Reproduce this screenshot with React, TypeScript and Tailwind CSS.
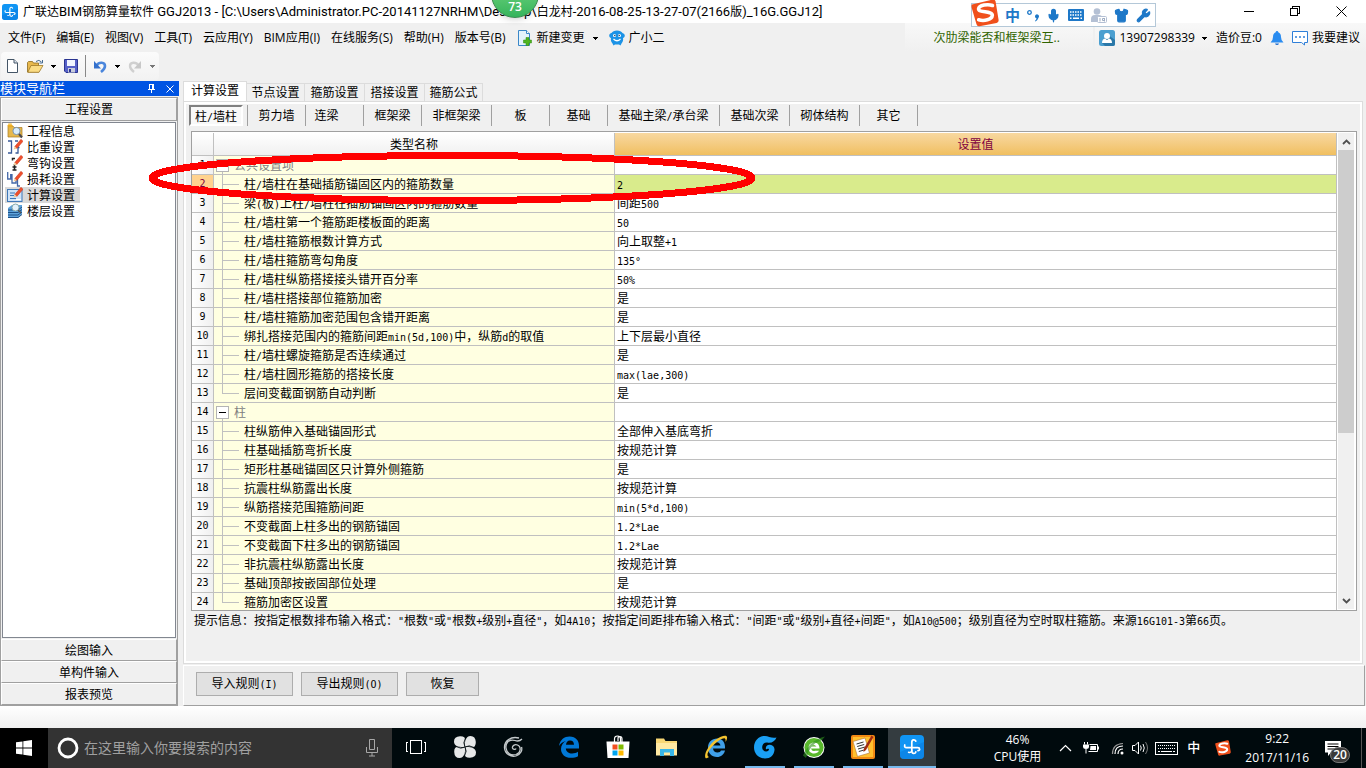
import React from "react";
import { Wrench, Shirt, Mic } from "lucide-react";

const UI = "font-['Open_Sans','Noto_Sans_CJK_SC',sans-serif]";
const SONG = "font-['Noto_Sans_CJK_SC',sans-serif]";

/* Chinese text with half-width Latin runs */
function T({ children }: { children: string }) {
  const parts = children.split(/([\x21-\x7e°]+)/);
  return (
    <>
      {parts.map((p, i) =>
        i % 2 === 1 ? (
          <span key={i} className="font-['DejaVu_Sans_Mono',monospace] text-[10px] leading-none">
            {p}
          </span>
        ) : (
          p
        )
      )}
    </>
  );
}

function Caret({ gray = false }: { gray?: boolean }) {
  return (
    <svg width="5" height="3" viewBox="0 0 5 3" shapeRendering="crispEdges">
      <path d="M0 0h5v1h-1v1h-1v1h-1v-1h-1v-1h-1z" fill={gray ? "#777" : "#000"} />
    </svg>
  );
}

function AppMark() {
  return (
    <>
      <rect width="24" height="24" rx="4" fill="#1095f4" />
      <path d="M0 17 24 7v13a4 4 0 0 1-4 4H4a4 4 0 0 1-4-4z" fill="#0878dc" opacity=".5" />
      <path
        d="M15.800 6.200C15 4.300 11.800 4.200 11.800 7.200V16c0 3 3.700 3.300 4 .8M4.800 10c-.6 1.600.2 2.700 1.800 2.700h11.200c2.400 0 2.400 3 .2 2.900"
        fill="none"
        stroke="#fff"
        strokeWidth="1.700"
        strokeLinecap="round"
      />
      <path d="M8.500 17.200c1.800.6 3.300-.3 3.300-2" fill="none" stroke="#fff" strokeWidth="1.500" strokeLinecap="round" />
    </>
  );
}

function SogouLogo({ size }: { size: number }) {
  return (
    <svg width={size} height={size} viewBox="0 0 28 28">
      <path d="M1 5.500 21.500.6q2.600-.4 3.100 2L27.600 21q.3 2.300-2 2.900L8.500 27.300q-2.400.4-3-2L.6 8.500Q.2 6 1 5.500z" fill="#f0501c" />
      <path
        d="M21.500 6.500C17 4.800 8 6 7.600 9.800c-.3 4 14 2 13.700 6.600-.3 4.300-8.300 6-13.600 4.400"
        fill="none"
        stroke="#fff"
        strokeWidth="3.600"
        strokeLinecap="round"
      />
    </svg>
  );
}

const menus = ["文件(F)", "编辑(E)", "视图(V)", "工具(T)", "云应用(Y)", "BIM应用(I)", "在线服务(S)", "帮助(H)", "版本号(B)"];

const titleParts = ["广联达", "BIM", "钢筋算量软件", " GGJ2013 - [C:\\Users\\Administrator.PC-20141127NRHM\\Desktop\\", "白龙村", "-2016-08-25-13-27-07(2166", "版", ")_16G.GGJ12]"];

function TitleBar() {
  return (
    <header className={`flex h-[23px] shrink-0 items-center bg-white pl-0.5 ${UI}`}>
      <svg width="16" height="16" viewBox="0 0 24 24"><AppMark /></svg>
      <h1 className="ml-[5px] flex-1 text-[12px] leading-4 whitespace-pre">
        {titleParts.map((p, i) =>
          i % 2 === 1 ? (
            <span key={i} className="font-['Roboto',sans-serif] text-[13px] leading-none">{p}</span>
          ) : (
            p
          )
        )}
      </h1>
      <div className="flex pr-0.5">
        <button aria-label="最小化" className="grid h-[22px] w-[46px] place-items-center">
          <svg width="11" height="11" shapeRendering="crispEdges"><path d="M0 5.500h10" stroke="#000" /></svg>
        </button>
        <button aria-label="还原" className="grid h-[22px] w-[46px] place-items-center">
          <svg width="11" height="11" shapeRendering="crispEdges"><path d="M.5 2.500h7v7h-7zM2.500 2.500v-2h7v7h-2" fill="none" stroke="#000" /></svg>
        </button>
        <button aria-label="关闭" className="grid h-[22px] w-[46px] place-items-center">
          <svg width="11" height="11"><path d="M.5.500l10 10M10.500.500l-10 10" stroke="#000" /></svg>
        </button>
      </div>
    </header>
  );
}

function MenuBar() {
  return (
    <div className={`flex h-7 shrink-0 items-center justify-between text-[12px] leading-4 whitespace-nowrap ${UI}`}>
      <nav className="flex items-center gap-[11px] pt-0.5 pl-2">
        {menus.map((m) => (
          <button key={m}>{m}</button>
        ))}
        <button className="flex items-center">
          <svg width="16" height="16" viewBox="0 0 16 16">
            <path d="M1.500.500h8l3 3v12h-11z" fill="#e4f3fc" stroke="#3a87c8" />
            <path d="M9.500.500v3h3" fill="#fff" stroke="#3a87c8" />
            <path d="M9 7.500h3v2.500h2.500v3H12v2.500H9V13H6.500v-3H9z" fill="#4fb520" stroke="#2f8a10" strokeWidth=".5" />
          </svg>
          <span className="mr-2 ml-1">新建变更</span>
          <Caret />
        </button>
        <button className="flex items-center gap-1">
          <svg width="16" height="16" viewBox="0 0 16 16">
            <path d="M2.500 3Q4 .5 8 .5T13.500 3q2.300.5 2.300 2.500c0 1.500-1 2.200-1.800 2.500.5 2-.2 4-1.500 5.500l-1 2-1.500-1H6l-1.500 1-1-2C2.200 12 1.500 10 2 8 1.200 7.700.2 7 .2 5.500.2 3.500 2.500 3 2.500 3z" fill="#1c93e6" />
            <circle cx="5.500" cy="5.500" r="1.500" fill="#fff" />
            <circle cx="10.500" cy="5.500" r="1.500" fill="#fff" />
            <circle cx="5.800" cy="5.500" r=".7" fill="#135" />
            <circle cx="10.200" cy="5.500" r=".7" fill="#135" />
            <path d="M4.500 9q3.500 3.500 7 0" fill="none" stroke="#fff" strokeWidth="1.200" />
          </svg>
          广小二
        </button>
      </nav>
      <div className="flex h-full items-center">
        <a href="#tip" className="h-full w-[188px] bg-gradient-to-b from-[#f8f8f8] to-[#f0f0f0] pl-7 leading-[30px] text-[#2f6400]">
          次肋梁能否和框架梁互..
        </a>
        <div className="ml-0.5 flex h-full items-center bg-gradient-to-b from-[#f8f8f8] to-[#f0f0f0] pt-0.5 pr-1.5 pl-1">
          <button className="flex items-center">
            <svg width="16" height="16" viewBox="0 0 16 16">
              <rect width="16" height="16" rx="2.500" fill="#4b9fd0" />
              <path d="M8 4l8 6v4q0 2-2 2H6l-3-3z" fill="#2b78a8" />
              <circle cx="8" cy="6" r="3" fill="#fff" />
              <path d="M3 13q0-4 3-4.500L8 10l2-1.500q3 .5 3 4.500z" fill="#fff" />
            </svg>
            <span className="mr-[7px] ml-1">13907298339</span>
            <Caret />
          </button>
          <span className="ml-[9px]">造价豆:0</span>
          <button aria-label="通知" className="ml-2">
            <svg width="14" height="16" viewBox="0 0 14 16">
              <path d="M7 1q1.300 0 1.300 1.300Q11 3.300 11 7q0 3.500 2.500 5.500H.5Q3 10.500 3 7q0-3.700 2.700-4.700Q5.700 1 7 1z" fill="#2a8cf0" />
              <path d="M5 13.500h4q-.5 1.500-2 1.500t-2-1.500z" fill="#1a6cd0" />
            </svg>
          </button>
          <button className="ml-2 flex items-center gap-1">
            <svg width="16" height="16" viewBox="0 0 16 16">
              <path d="M.5 1.500h15v11h-3v2.500L9.500 12.500h-9z" fill="#fff" stroke="#2f7fd8" />
              <path d="M3 7h2M7 7h2M11 7h2" stroke="#2f7fd8" strokeWidth="1.300" />
            </svg>
            我要建议
          </button>
        </div>
      </div>
    </div>
  );
}

function Toolbar() {
  return (
    <div className="flex h-[30px] shrink-0 items-center pl-px">
      <div className="flex h-7 items-center rounded bg-gradient-to-b from-[#fbfbfb] to-[#f2f2f2] pr-1 pl-1.5">
        <button aria-label="新建">
          <svg width="11" height="14" viewBox="0 0 11 14">
            <path d="M.5.500h6.500l3.500 3.500v9.500H.5z" fill="#fff" stroke="#456" />
            <path d="M7 .5V4h3.500" fill="#dde6f0" stroke="#456" />
          </svg>
        </button>
        <button aria-label="打开" className="ml-[9px] flex items-center gap-[7px]">
          <svg width="17" height="14" viewBox="0 0 17 14">
            <path d="M.5 13V3.500l1-1h4l1 1.500h5V13z" fill="#e8b84c" stroke="#8a6a20" strokeWidth=".8" />
            <path d="M.8 13.300 4 6.500h12L12 13.300z" fill="#fbdc84" stroke="#a07a28" strokeWidth=".8" />
            <path d="M9 2.500Q12 0 14.500 3M15.500 1v3h-3" fill="none" stroke="#456a90" />
          </svg>
          <Caret />
        </button>
        <button aria-label="保存" className="ml-2">
          <svg width="14" height="14" viewBox="0 0 14 14">
            <path d="M.5.500h13v13H2l-1.500-1.500z" fill="#5560c8" stroke="#2a3490" />
            <path d="M3 1h8v6H3z" fill="#f0f4ff" />
            <path d="M4 9h7v4.500H4z" fill="#c8ccdc" />
            <path d="M5 10h2v3H5z" fill="#2a3490" />
          </svg>
        </button>
        <span className="mr-2 ml-[7px] h-[22px] w-px bg-[#888]" />
        <button aria-label="撤销" className="flex items-center gap-2">
          <svg width="13" height="13" viewBox="0 0 13 13">
            <path d="M2.500 5.500C5 1.500 11 2 11 6q0 3-4 6" fill="none" stroke="#4a86dc" strokeWidth="2.600" />
            <path d="M0 1v7.500h7z" fill="#3470cc" />
          </svg>
          <Caret />
        </button>
        <button aria-label="重做" className="ml-2 flex items-center gap-[9px]">
          <svg width="13" height="13" viewBox="0 0 13 13">
            <path d="M10.500 5.500C8 1.500 2 2 2 6q0 3 4 6" fill="none" stroke="#d0d0d0" strokeWidth="2.400" />
            <path d="M13 1v7.500H6z" fill="#c8c8c8" />
          </svg>
          <Caret gray />
        </button>
      </div>
    </div>
  );
}

const Pencil = () => (
  <>
    <path d="M14 .3 16 2.300 9.800 9.500 7.800 7.500z" fill="#f0502c" stroke="#c02a14" strokeWidth=".5" />
    <path d="M7.800 7.500 9.800 9.500 6.500 10.500z" fill="#f0c890" />
  </>
);

const navItems: { label: string; icon: React.ReactNode }[] = [
  {
    label: "工程信息",
    icon: (
      <>
        <path d="M1 3h5l1 1.500h8V14H1z" fill="#e6b84c" stroke="#a87820" strokeWidth=".7" />
        <path d="M3 0v5M.5 2.500h5M1 .7l4 3.600M5 .7 1 4.300" stroke="#f0b020" strokeWidth="1" />
        <circle cx="9.500" cy="8" r="3.600" fill="#d8ecfa" stroke="#7a93ab" />
        <path d="M12 11l3 3.500" stroke="#4a4a52" strokeWidth="2" />
      </>
    ),
  },
  {
    label: "比重设置",
    icon: (
      <>
        <path d="M1 2h3.500v12H1M8 2h3M11 7.500v6.500H8.500M11 8.500h1.500" fill="none" stroke="#3a5a98" strokeWidth="1.300" />
        <Pencil />
      </>
    ),
  },
  {
    label: "弯钩设置",
    icon: (
      <>
        <path d="M8 3.500H5.500v2M7.500 9v6M5.500 15h4M5.500 12h4" fill="none" stroke="#222" strokeWidth="1.500" />
        <Pencil />
      </>
    ),
  },
  {
    label: "损耗设置",
    icon: (
      <>
        <path d="M.7 1v7h3V3M5 3v9h4V9M10.500 8v7h2.500" fill="none" stroke="#4468a8" strokeWidth="1.300" />
        <Pencil />
      </>
    ),
  },
  {
    label: "计算设置",
    icon: (
      <>
        <rect x=".5" y="2.500" width="14.500" height="12" fill="#cfe3f8" stroke="#3f78b8" />
        <path d="M3 6h5M3 8.500h4M3 11.500h6" stroke="#3f78b8" />
        <path d="M9 12.500h5" stroke="#fff" />
        <Pencil />
      </>
    ),
  },
  {
    label: "楼层设置",
    icon: (
      <>
        <path d="M1 5l4-3h10v9l-4 4H1z" fill="#5fa4dc" />
        <path d="M1 7h10l4-3M1 9.500h10l4-3M1 12h10l4-3M1 14.500h10l4-3" fill="none" stroke="#1d4f86" strokeWidth="1" />
        <circle cx="8.500" cy="4.500" r="3.500" fill="#e4f2fc" stroke="#8aa" />
        <path d="M11 7l3 3" stroke="#555" strokeWidth="1.600" />
      </>
    ),
  },
];

function Sidebar() {
  const bar = "h-[22px] w-full border border-t-white border-r-[#a0a0a0] border-b-[#a0a0a0] border-l-white bg-[#f0f0f0] text-center leading-5";
  return (
    <aside className={`flex w-[179px] shrink-0 flex-col text-[12px] ${SONG}`}>
      <div className="flex h-[15px] shrink-0 items-center bg-[#0054e3] text-white">
        <span className="flex-1 pb-0.5 text-[13px] leading-[13px]">模块导航栏</span>
        <button aria-label="固定" className="mr-[11px]">
          <svg width="7" height="9" shapeRendering="crispEdges"><path d="M1.500 0v5M4.500 0v5M1 .5h5M5.500 0v5M0 5.500h7M3.500 5v4" stroke="#fff" fill="none" /></svg>
        </button>
        <button aria-label="关闭导航栏" className="mr-[5px]">
          <svg width="8" height="8"><path d="M.5.500l7 7M7.500.500l-7 7" stroke="#fff" /></svg>
        </button>
      </div>
      <div className="mt-px mr-px flex min-h-0 flex-1 flex-col border border-[#a0a0a0]">
        <button className="h-[23px] shrink-0 border border-t-white border-r-[#a0a0a0] border-b-[#a0a0a0] border-l-white pb-0.5 leading-[19px]">工程设置</button>
        <ul className="m-px min-h-0 flex-1 border border-[#828790] bg-white pl-0.5">
          {navItems.map((n) => (
            <li key={n.label} className="h-4">
              <button className={`flex h-4 items-center gap-1 pr-[5px] pl-0.5 leading-4 ${n.label === "计算设置" ? "bg-[#d9d9d9]" : ""}`}>
                <svg width="16" height="16" viewBox="0 0 16 16">{n.icon}</svg>
                {n.label}
              </button>
            </li>
          ))}
        </ul>
        <button className={bar}>绘图输入</button>
        <button className={bar}>单构件输入</button>
        <button className={bar}>报表预览</button>
      </div>
    </aside>
  );
}

type Row = [string, string];
const rows: Row[] = [
  ["公共设置项", ""],
  ["柱/墙柱在基础插筋锚固区内的箍筋数量", "2"],
  ["梁(板)上柱/墙柱在插筋锚固区内的箍筋数量", "间距500"],
  ["柱/墙柱第一个箍筋距楼板面的距离", "50"],
  ["柱/墙柱箍筋根数计算方式", "向上取整+1"],
  ["柱/墙柱箍筋弯勾角度", "135°"],
  ["柱/墙柱纵筋搭接接头错开百分率", "50%"],
  ["柱/墙柱搭接部位箍筋加密", "是"],
  ["柱/墙柱箍筋加密范围包含错开距离", "是"],
  ["绑扎搭接范围内的箍筋间距min(5d,100)中，纵筋d的取值", "上下层最小直径"],
  ["柱/墙柱螺旋箍筋是否连续通过", "是"],
  ["柱/墙柱圆形箍筋的搭接长度", "max(lae,300)"],
  ["层间变截面钢筋自动判断", "是"],
  ["柱", ""],
  ["柱纵筋伸入基础锚固形式", "全部伸入基底弯折"],
  ["柱基础插筋弯折长度", "按规范计算"],
  ["矩形柱基础锚固区只计算外侧箍筋", "是"],
  ["抗震柱纵筋露出长度", "按规范计算"],
  ["纵筋搭接范围箍筋间距", "min(5*d,100)"],
  ["不变截面上柱多出的钢筋锚固", "1.2*Lae"],
  ["不变截面下柱多出的钢筋锚固", "1.2*Lae"],
  ["非抗震柱纵筋露出长度", "按规范计算"],
  ["基础顶部按嵌固部位处理", "是"],
  ["箍筋加密区设置", "按规范计算"],
];
const isGroup = (i: number) => i === 0 || i === 13;
const isLast = (i: number) => i === 12 || i === 23;

function Branch({ i }: { i: number }) {
  return isGroup(i) ? (
    <svg width="20" height="18" shapeRendering="crispEdges" className="shrink-0">
      <rect x="2.500" y="3.500" width="12" height="12" fill="#fff" stroke="#b4b4b4" />
      <path d="M5 9.500h7" stroke="#000" />
      <path d="M8.500 16v2" stroke="#c0c0c0" />
    </svg>
  ) : (
    <svg width="30" height="18" shapeRendering="crispEdges" className="shrink-0">
      <path d={isLast(i) ? "M8.500 0V9.500H25" : "M8.500 0V18M8 9.500H25"} fill="none" stroke="#c0c0c0" />
    </svg>
  );
}

function SettingsTable() {
  return (
    <div className="flex min-h-0 flex-1 border border-[#a0a0a0] bg-white pt-px">
      <div className="min-w-0 flex-1 overflow-hidden">
        <table className="w-full table-fixed border-separate border-spacing-0">
          <colgroup>
            <col className="w-[22px]" />
            <col className="w-[401px]" />
            <col />
          </colgroup>
          <thead>
            <tr className="h-[23px]">
              <th aria-label="序号" className="border-r border-b border-[#c0c0c0] bg-gradient-to-b from-white to-[#f0f0f0] p-0" />
              <th className="border-r border-b border-[#c0c0c0] bg-gradient-to-b from-white to-[#f0f0f0] p-0 font-normal">类型名称</th>
              <th className="border-r border-b border-[#c0c0c0] bg-gradient-to-b from-[#f8d8a0] to-[#f0bf5f] p-0 font-normal text-[#800040]">设置值</th>
            </tr>
          </thead>
          <tbody>
            {rows.map(([name, value], i) => (
              <tr key={i} className="h-[19px]">
                <td
                  className={`border-r border-b border-[#c0c0c0] p-0 text-center font-['DejaVu_Sans_Mono',monospace] text-[10px] leading-[18px] ${
                    i === 1 ? "bg-[#ffd38f] text-[#800040]" : "bg-gradient-to-r from-white to-[#f0f0f0]"
                  }`}
                >
                  {i + 1}
                </td>
                <td className="border-r border-b border-[#c0c0c0] bg-[#ffffe1] p-0">
                  <div className={`flex h-[18px] leading-[18px] whitespace-nowrap ${isGroup(i) ? "text-[#808080]" : ""}`}>
                    <Branch i={i} />
                    <span><T>{name}</T></span>
                  </div>
                </td>
                <td className={`border-r border-b border-[#c0c0c0] p-0 ${i === 1 ? "bg-[#d9eb8c]" : "bg-white"}`}>
                  <div className="h-[18px] pl-0.5 leading-[18px] whitespace-nowrap"><T>{value}</T></div>
                </td>
              </tr>
            ))}
          </tbody>
        </table>
      </div>
      <div className="mr-0.5 mb-px ml-px flex w-4 shrink-0 flex-col items-center bg-[#f0f0f0]">
        <button aria-label="向上滚动" className="grid h-[17px] w-full shrink-0 place-items-center">
          <svg width="9" height="6"><path d="M1 5l3.500-3.500L8 5" fill="none" stroke="#505050" strokeWidth="1.800" /></svg>
        </button>
        <div className="min-h-0 w-full flex-1">
          <div className="h-[64%] w-full bg-[#cdcdcd]" />
        </div>
        <button aria-label="向下滚动" className="grid h-[17px] w-full shrink-0 place-items-center">
          <svg width="9" height="6"><path d="M1 1l3.500 3.500L8 1" fill="none" stroke="#505050" strokeWidth="1.800" /></svg>
        </button>
      </div>
    </div>
  );
}

const tabs: [string, string][] = [
  ["节点设置", "w-[58px]"],
  ["箍筋设置", "w-[60px]"],
  ["搭接设置", "w-[60px]"],
  ["箍筋公式", "w-[58px]"],
];
const subTabs: [string, string][] = [
  ["剪力墙", "w-[58px]"],
  ["连梁", "w-[58px] pr-4"],
  ["框架梁", "w-[58px]"],
  ["非框架梁", "w-[70px]"],
  ["板", "w-[58px]"],
  ["基础", "w-[58px]"],
  ["基础主梁/承台梁", "w-[112px]"],
  ["基础次梁", "w-[70px]"],
  ["砌体结构", "w-[70px]"],
  ["其它", "w-[58px]"],
];

function Content() {
  const btn = "h-6 border border-[#adadad] bg-[#e1e1e1] pb-0.5";
  return (
    <main className={`flex min-w-0 flex-1 flex-col pl-1 text-[12px] leading-4 ${SONG}`}>
      <div className="flex h-5 shrink-0 items-end">
        <button className="h-5 w-[64px] border border-b-0 border-[#dcdcdc] bg-white pb-1">计算设置</button>
        {tabs.map(([t, w]) => (
          <button key={t} className={`h-[18px] border-t border-r border-[#dcdcdc] pb-0.5 ${w}`}>{t}</button>
        ))}
      </div>
      <section className="mr-[3px] flex min-h-0 flex-1 flex-col border border-[#dcdcdc] bg-white p-0.5">
        <div className="flex min-h-0 flex-1 flex-col bg-[#f0f0f0] pt-px">
          <div className="flex h-[21px] shrink-0 pl-[3px]">
            <button className="mr-1 h-[21px] w-[54px] border-2 border-t-[#808080] border-r-white border-b-white border-l-[#808080] bg-[#f8f8f8]">
              <T>柱/墙柱</T>
            </button>
            <div className="flex border-l border-[#a0a0a0]">
              {subTabs.map(([t, w]) => (
                <button key={t} className={`border-r border-[#a0a0a0] pb-0.5 text-center whitespace-nowrap ${w}`}>
                  <T>{t}</T>
                </button>
              ))}
            </div>
          </div>
          <div className="mt-[5px] mr-[3px] flex min-h-0 flex-1 flex-col pl-[5px]">
            <SettingsTable />
          </div>
          <p className="h-[50px] shrink-0 pt-px pl-2 whitespace-nowrap">
            <T>提示信息：按指定根数排布输入格式："根数"或"根数+级别+直径"，如4A10；按指定间距排布输入格式："间距"或"级别+直径+间距"，如A10@500；级别直径为空时取柱箍筋。来源16G101-3第66页。</T>
          </p>
        </div>
      </section>
      <div className="mt-px mr-px flex h-[41px] shrink-0 gap-2 border border-t-white border-r-[#a0a0a0] border-b-[#a0a0a0] border-l-white pt-1.5 pl-3">
        <button className={`w-[97px] ${btn}`}><T>导入规则(I)</T></button>
        <button className={`w-[97px] ${btn}`}><T>导出规则(O)</T></button>
        <button className={`w-[73px] ${btn}`}>恢复</button>
      </div>
    </main>
  );
}

function TaskIcon({ label, children, state = "" }: { label: string; children: React.ReactNode; state?: "" | "run" | "active" }) {
  return (
    <button aria-label={label} className={`flex h-10 w-12 flex-col items-center ${state === "active" ? "bg-[#343c40]" : ""}`}>
      <span className="grid h-[38px] place-items-center">
        <svg width="24" height="24" viewBox="0 0 24 24">{children}</svg>
      </span>
      {state !== "" && <span className={`h-0.5 bg-[#76b9ed] ${state === "active" ? "w-12" : "w-10"}`} />}
    </button>
  );
}

function Taskbar() {
  return (
    <footer className={`flex h-10 shrink-0 items-stretch justify-between bg-[#000a0d] text-white ${UI}`}>
      <div className="flex">
        <button aria-label="开始" className="grid w-12 place-items-center bg-black">
          <svg width="16" height="16" viewBox="0 0 16 16"><path d="M0 2.300 6.500 1.400v6.200H0zM7.300 1.300 16 0v7.600H7.300zM0 8.400h6.500v6.200L0 13.700zM7.300 8.400H16V16l-8.700-1.300z" fill="#fff" /></svg>
        </button>
        <label className="flex w-[344px] items-center bg-[#333333] pr-[14px] pl-[9px]">
          <svg width="22" height="22"><circle cx="11" cy="11" r="9" fill="none" stroke="#fff" strokeWidth="2.800" /></svg>
          <input aria-label="搜索" placeholder="在这里输入你要搜索的内容" className="ml-[5px] min-w-0 flex-1 bg-transparent text-[14px] leading-5 placeholder:text-[#a0a0a0] focus:outline-none" />
          <svg width="12" height="18" viewBox="0 0 12 18"><path d="M3.500.500h5v10h-5zM.5 8v5.500h11V8M6 13.500V17M3 17h6" fill="none" stroke="#a8a8a8" /></svg>
        </label>
        <div className="flex gap-px">
          <TaskIcon label="任务视图">
            <g fill="none" stroke="#fff" shapeRendering="crispEdges"><path d="M6.500 5.500h11v13h-11zM4 7.500H2.500v9H4M20 7.500h1.500v9H20" /></g>
          </TaskIcon>
          <TaskIcon label="风车">
            <g fill="#e6e8e8">
              {[0, 90, 180, 270].map((r) => (
                <path key={r} d="M12 12C7 12.500 1 11.500 1 6.500Q1 1.500 7 1.200q5.500-.2 5.500 4.300-2 2-.5 6.500z" transform={`rotate(${r} 12 12)`} />
              ))}
            </g>
            <path d="M12 12q-2.500-4 .5-9M12 12q4-2.500 9 .5M12 12q2.500 4-.5 9M12 12q-4 2.500-9-.5" stroke="#000a0d" strokeWidth=".9" fill="none" />
          </TaskIcon>
          <TaskIcon label="旋风">
            <path d="M20 4q-3 3-7 1.500C6 3.500 3.500 9 4 13c.6 5 5 8 10 6.500 5-1.800 5.500-8 1.500-9.500-3-1-5.500 1-5 3 .5 1.800 3 1.800 3.500.5M17 3C9 1 2 5.500 2.500 13 3 19 9 22.500 14 21c5-1.500 6.500-6 5.500-9" fill="none" stroke="#c4cacc" strokeWidth="1.300" />
          </TaskIcon>
          <span className="w-[5px]" />
          <TaskIcon label="Edge">
            <path d="M2 11C3 4.500 7.500 1.500 12.500 1.500c6.500 0 9.700 4.500 9.500 9.800v2.200H8.800c.3 3.500 3.200 5 6.200 5 2.500 0 4.500-.7 6-1.700v4.500c-1.800 1-4.300 1.500-7 1.500-6 0-10-3.500-10-8.800 0-3.700 2-6.500 5-8C6 6.800 3.500 8.500 2 11zM9 9.700h8c0-2.700-1.500-4.200-4-4.200S9.300 7.300 9 9.700z" fill="#0078d7" />
          </TaskIcon>
          <TaskIcon label="应用商店">
            <path d="M8.500 8V4q0-3 3-3t3 3v4M12 6V3.500q0-2 2-2t2 2.500v4" fill="none" stroke="#fff" strokeWidth="1.200" />
            <path d="M.5 6.500h23L22.500 23h-21z" fill="#fff" />
            <path d="M6.500 9.500h5v5h-5z" fill="#f25022" /><path d="M12.500 9.500h5v5h-5z" fill="#7fba00" />
            <path d="M6.500 15.500h5v5h-5z" fill="#00a4ef" /><path d="M12.500 15.500h5v5h-5z" fill="#ffb900" />
          </TaskIcon>
          <TaskIcon label="文件资源管理器">
            <path d="M1 3.500h8l1.500 2.500H22V20H1z" fill="#f8d775" /><path d="M1 8h21v12.500H1z" fill="#ffe9a2" />
            <path d="M5 21v-7h14v7h-4v-3.500H9V21z" fill="#38b6e8" />
          </TaskIcon>
          <TaskIcon label="Internet Explorer">
            <path d="M4 12.500C4 7 8 3.500 13 3.500c5.500 0 8.500 4 8 10H9c.3 2.500 2 4 4.500 4 2 0 3-.8 3.500-2h4c-1 4-4 6.500-8 6.500-5.500 0-9-4-9-9.500zM9 10.500h7.500c-.3-2-1.700-3.300-3.700-3.300S9.300 8.500 9 10.500z" fill="#3f9fe8" />
            <path d="M1.500 23C-.5 19 5 9.500 12 4.500 17 1 22.500-.5 23 2c.3 1.500-.5 3.500-1.500 5 .2-2 .2-3.500-1.200-3.700C16 3 3.500 14.500 3.500 20q0 1.500 1.500 2c-1 1-2.500 1.500-3.500 1z" fill="#f4c430" />
          </TaskIcon>
          <TaskIcon label="广联达" state="run">
            <path d="M23.500 2.500C22 6 19 8.200 15 7.700c-3.500-.5-5.800 1.300-5.800 4.600 0 2.700 1.800 4.200 3.900 4.200 1.900 0 2.900-1.200 2.900-2.500-.8-.6-2.200-.4-3 .4-.8-3 1.200-5 4-4.700 3 .3 4.800 2.500 4.500 5.300C21 20 17.500 23.500 12 23.500 5.500 23.500 1 18.500 1 12.500 1 5.500 6 .8 12 1c3.500.2 7 2.800 11.500 1.500z" fill="#1aa0f4" />
          </TaskIcon>
          <TaskIcon label="360浏览器" state="run">
            <circle cx="12" cy="12.500" r="10.500" fill="#fff" /><circle cx="12" cy="12.500" r="9.600" fill="#59b82c" />
            <path d="M7 13.500h10.500c0-4-2.300-6-5.500-6s-5.500 2.300-5.500 5.500 2.300 5.500 5.500 5.500c2.300 0 4-.9 5-2.700h-4q-3 1-4-2.300zM9.500 11.500q2.500-3 5 0z" fill="#fff" fillRule="evenodd" />
            <path d="M1 20.500Q8 5 23 1.500 21 5 17 6.500 9 8.500 4 23z" fill="#2f8f1c" opacity=".6" />
          </TaskIcon>
          <TaskIcon label="记事" state="run">
            <rect width="24" height="24" rx="2" fill="#f28a14" /><rect x="2" y="2" width="20" height="20" fill="#ffc02e" />
            <path d="M2 6.500 14 3l4.500 15-12 3.500z" fill="#fff" stroke="#b07030" strokeWidth=".6" />
            <path d="M5.500 9l7-2M6.200 11.500l7-2M7 14l7-2M7.800 16.500l5-1.400" stroke="#333" />
            <path d="M20.500.500 22.500 2 15 15l-2.500 2 .3-3.200z" fill="#a02c14" />
          </TaskIcon>
          <TaskIcon label="广联达BIM钢筋算量软件" state="active">
            <AppMark />
          </TaskIcon>
        </div>
      </div>
      <div className="flex items-center text-[12px]">
        <div className="mr-[18px] text-center leading-[17px]">
          <div>46%</div>
          <div>CPU使用</div>
        </div>
        <button aria-label="显示隐藏的图标" className="mr-[11px]">
          <svg width="13" height="8"><path d="M1 7l5.500-5.500L12 7" fill="none" stroke="#fff" strokeWidth="1.200" /></svg>
        </button>
        <svg width="16" height="12" viewBox="0 0 16 12" className="mr-[11px]">
          <path d="M6.500 2.500h8v7h-9" fill="none" stroke="#fff" /><path d="M7.500 4h5.500v4H7z" fill="#fff" /><path d="M15.500 4.500v3M1.500 0v2.500M4.500 0v2.500M3 7v4.500" stroke="#fff" fill="none" /><path d="M0 2.500h6v2q0 2.500-3 2.500t-3-2.500z" fill="#fff" />
        </svg>
        <svg width="14" height="14" viewBox="0 0 14 14" className="mr-2">
          <circle cx="12" cy="12" r="1.500" fill="#fff" />
          <path d="M8 13q0-5 5-5M5 13q0-8 8-8" fill="none" stroke="#fff" strokeWidth="1.200" /><path d="M2.500 13Q2.500 3 13 2.500" fill="none" stroke="#999" strokeWidth="1.200" />
        </svg>
        <svg width="17" height="14" viewBox="0 0 17 14" className="mr-1.5">
          <path d="M.5 4.500H3l3.500-3.500v12L3 9.500H.5z" fill="none" stroke="#fff" /><path d="M8.500 4.500q1.500 2.500 0 5M11 3q2.500 4 0 8" fill="none" stroke="#fff" /><path d="M13.500 1q4 6 0 12" fill="none" stroke="#777" />
        </svg>
        <svg width="23" height="13" viewBox="0 0 23 13" shapeRendering="crispEdges" className="mr-[9px]">
          <path d="M.5.500h22v12H.5z" fill="none" stroke="#fff" /><path d="M3 3.500h17M3 6.500h17" stroke="#fff" strokeDasharray="1 1" /><path d="M3 9.500h2M6 9.500h11M18 9.500h2" stroke="#fff" />
        </svg>
        <span className="mr-[15px] text-[13px] font-medium">中</span>
        <SogouLogo size={16} />
        <time className="ml-[14px] text-center leading-[19px]">
          <div>9:22</div>
          <div>2017/11/16</div>
        </time>
        <button aria-label="操作中心" className="relative ml-4 h-10 w-9">
          <svg width="16" height="15" viewBox="0 0 16 15"><path d="M0 0h16v11.500H6L3 15v-3.500H0z" fill="#fff" /><path d="M2.500 3h11M2.500 5.500h11M2.500 8h11" stroke="#000" /></svg>
          <span className="absolute top-[19px] left-[5px] h-4 w-5 rounded-full border border-[#777] bg-[#3a3a3a] text-center text-[12px] leading-[14px] font-semibold">20</span>
        </button>
        <span className="h-10 w-px bg-[#555]" />
        <span className="w-1" />
      </div>
    </footer>
  );
}

function ImeBar() {
  return (
    <div className="absolute top-[3px] right-[210px] flex h-[24px] items-center gap-[7px] border border-[#b4c8d8] bg-white pr-1 pl-[33px] text-[#1e78c8]">
      <span className="absolute -top-[5px] -left-[1px]"><SogouLogo size={28} /></span>
      <span className="font-['Noto_Sans_CJK_SC',sans-serif] text-[15px] leading-5 font-bold">中</span>
      <svg width="12" height="14" viewBox="0 0 12 14"><circle cx="2.500" cy="4.500" r="1.800" fill="none" stroke="currentColor" strokeWidth="1.300" /><path d="M8 8.500a2 2 0 1 1 3.500 1.200Q10.800 12 8.500 13.500L8 13q1.500-1.500 1.500-2.700Q8 10 8 8.500z" fill="currentColor" /></svg>
      <Mic size={15} fill="currentColor" strokeWidth={2} />
      <svg width="16" height="12" viewBox="0 0 16 12"><rect width="16" height="12" rx="1" fill="currentColor" /><path d="M2 3h12M2 6h12" stroke="#fff" strokeWidth="1.400" strokeDasharray="1.500 1" /><path d="M2 9.200h1.500M5 9.200h6M12.500 9.200H14" stroke="#fff" strokeWidth="1.400" /></svg>
      <svg width="16" height="15" viewBox="0 0 16 15"><circle cx="6" cy="3.500" r="3.300" fill="#b4c0d4" /><path d="M0 14V11q0-4 4-4h4q3 0 3.500 3H7v4z" fill="#b4c0d4" /><rect x="6.500" y="8.500" width="9" height="6" rx="1" fill="#fff" stroke="#b4c0d4" /><path d="M9 10v3.500M11.500 10.500h2v2h-2zM13.500 10v3.500" stroke="#a0aec4" fill="none" /></svg>
      <Shirt size={15} fill="currentColor" />
      <Wrench size={15} fill="currentColor" />
    </div>
  );
}

export default function App() {
  return (
    <div className="relative flex h-screen flex-col overflow-hidden bg-[#f0f0f0] text-black">
      <TitleBar />
      <MenuBar />
      <Toolbar />
      <div className="flex min-h-0 flex-1">
        <Sidebar />
        <Content />
      </div>
      <div className="h-[22px] shrink-0 bg-gradient-to-b from-white to-[#f0f0f0]" />
      <Taskbar />

      <div className="absolute -top-[30px] left-[491px] h-[48px] w-[48px] rounded-full border border-[#3a8a50] bg-gradient-to-b from-[#7fe08a] to-[#34b45c] pt-[29px] text-center font-['Open_Sans',sans-serif] text-[12px] leading-[14px] font-semibold text-white shadow-md">
        73
      </div>
      <ImeBar />
      <svg className="pointer-events-none absolute top-[151px] left-[149px]" width="607" height="54" shapeRendering="crispEdges">
        <ellipse cx="303" cy="27" rx="300" ry="22.5" fill="none" stroke="#ff0000" strokeWidth="7" />
      </svg>
    </div>
  );
}
